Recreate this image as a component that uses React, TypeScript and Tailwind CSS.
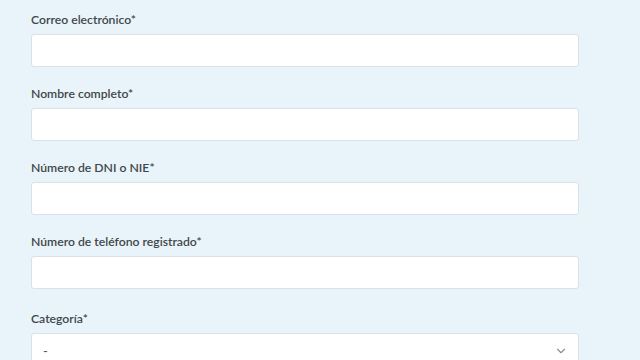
import { ChevronDown } from "lucide-react";

const fields = [
  "Correo electrónico*",
  "Nombre completo*",
  "Número de DNI o NIE*",
  "Número de teléfono registrado*",
];

export default function App() {
  return (
    <div
      className="min-h-screen w-full bg-[#e8f4f9] pl-[31px] pt-[11px]"
      style={{ fontFamily: "Lato, 'Open Sans', sans-serif" }}
    >
      <form className="w-[548px]">
        {fields.map((label) => (
          <div key={label} className="mb-[18px]">
            <label className="block text-[12.2px] leading-[18px] font-semibold text-[#41464a]">
              {label}
            </label>
            <input
              type="text"
              className="mt-[5px] block h-[33px] w-full rounded-[3px] border border-[#d9e2e7] bg-white px-3 text-[13px] outline-none"
            />
          </div>
        ))}

        {/* Category select */}
        <div className="pt-[3px]">
          <label className="block text-[12.2px] leading-[18px] font-semibold text-[#41464a]">
            Categoría*
          </label>
          <div className="relative mt-[5px] h-[33px] w-full rounded-[3px] border border-[#d9e2e7] bg-white">
            <span className="absolute left-[11px] top-[8px] text-[13px] leading-[18px] text-[#555]">-</span>
            <ChevronDown
              className="absolute right-[10px] top-[10px] text-[#8a9196]"
              size={14}
              strokeWidth={2}
            />
          </div>
        </div>
      </form>
    </div>
  );
}
